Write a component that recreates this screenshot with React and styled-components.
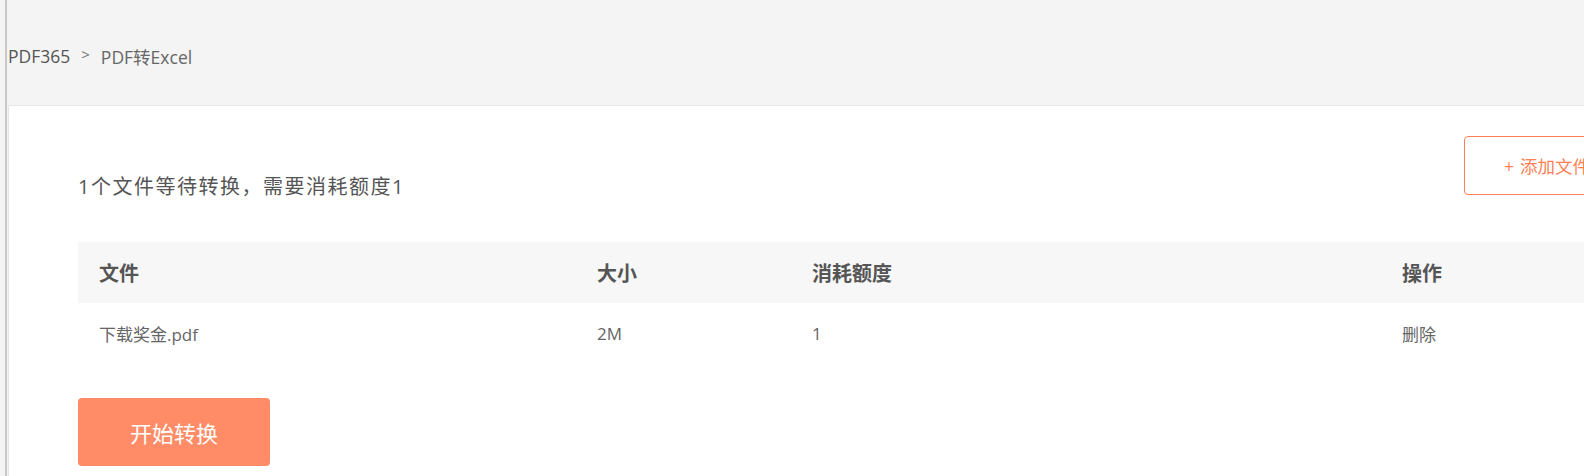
import React from "react";
import styled, { createGlobalStyle } from "styled-components";

const GlobalStyle = createGlobalStyle`
  body {
    margin: 0;
    background: #f4f4f4;
    overflow: hidden;
    font-family: "Open Sans", "Noto Sans CJK SC", sans-serif;
  }
`;

const Frame = styled.div`
  width: 1720px;
  height: 476px;
  margin-left: 5px;
  padding-left: 1px;
  border-left: 2px solid #c9c9c9;
  display: flex;
  flex-direction: column;
`;

const Breadcrumb = styled.div`
  height: 105px;
  box-sizing: border-box;
  padding-top: 7px;
  display: flex;
  align-items: center;
  gap: 11px;
  font-size: 17.5px;
  color: #666;
`;

const Crumb = styled.span`
  color: ${(p) => (p.$current ? "#666" : "#555")};
`;

const Sep = styled.span`
  font-size: 15px;
  color: #777;
  position: relative;
  top: -2px;
`;

const Panel = styled.div`
  flex: 1;
  background: #fff;
  border-top: 1px solid #e6e6e6;
  border-left: 1px solid #e6e6e6;
  padding: 30px 0 0 69px;
`;

const Toolbar = styled.div`
  width: 1576px;
  display: flex;
  justify-content: space-between;
  align-items: flex-start;
  height: 59px;
`;

const Summary = styled.div`
  margin-top: 37px;
  font-size: 20px;
  line-height: 28px;
  letter-spacing: 1.5px;
  color: #555;
`;

const AddButton = styled.button`
  width: 190px;
  height: 59px;
  border: 1px solid #ff7f55;
  border-radius: 4px;
  background: #fff;
  color: #ff7f55;
  font-family: inherit;
  font-size: 17.5px;
  padding-left: 39px;
  display: flex;
  align-items: center;
  gap: 6px;
`;

const Table = styled.div`
  margin-top: 47px;
  display: grid;
  grid-template-columns: 498px 215px 590px 1fr;
`;

const HeadCell = styled.div`
  height: 61px;
  background: #f7f7f7;
  padding-left: 21px;
  display: flex;
  align-items: center;
  font-size: 20px;
  font-weight: 700;
  color: #555;
`;

const Cell = styled.div`
  height: 60px;
  padding-left: 21px;
  display: flex;
  align-items: center;
  font-size: 17px;
  color: #666;
`;

const StartButton = styled.button`
  margin-top: 35px;
  width: 192px;
  height: 68px;
  border: none;
  border-radius: 4px;
  background: #ff8c66;
  color: #fff;
  font-family: inherit;
  font-size: 22px;
`;

const columns = ["文件", "大小", "消耗额度", "操作"];
const rows = [{ name: "下载奖金.pdf", size: "2M", cost: "1" }];

export default function App() {
  return (
    <>
      <GlobalStyle />
      <Frame>
        <Breadcrumb>
          <Crumb>PDF365</Crumb>
          <Sep>&gt;</Sep>
          <Crumb $current>PDF转Excel</Crumb>
        </Breadcrumb>
        <Panel>
          <Toolbar>
            <Summary>1个文件等待转换，需要消耗额度1</Summary>
            <AddButton>
              <span>+</span>
              <span>添加文件</span>
            </AddButton>
          </Toolbar>
          <Table>
            {columns.map((c) => (
              <HeadCell key={c}>{c}</HeadCell>
            ))}
            {rows.map((r) => (
              <React.Fragment key={r.name}>
                <Cell>{r.name}</Cell>
                <Cell>{r.size}</Cell>
                <Cell>{r.cost}</Cell>
                <Cell>删除</Cell>
              </React.Fragment>
            ))}
          </Table>
          <StartButton>开始转换</StartButton>
        </Panel>
      </Frame>
    </>
  );
}
